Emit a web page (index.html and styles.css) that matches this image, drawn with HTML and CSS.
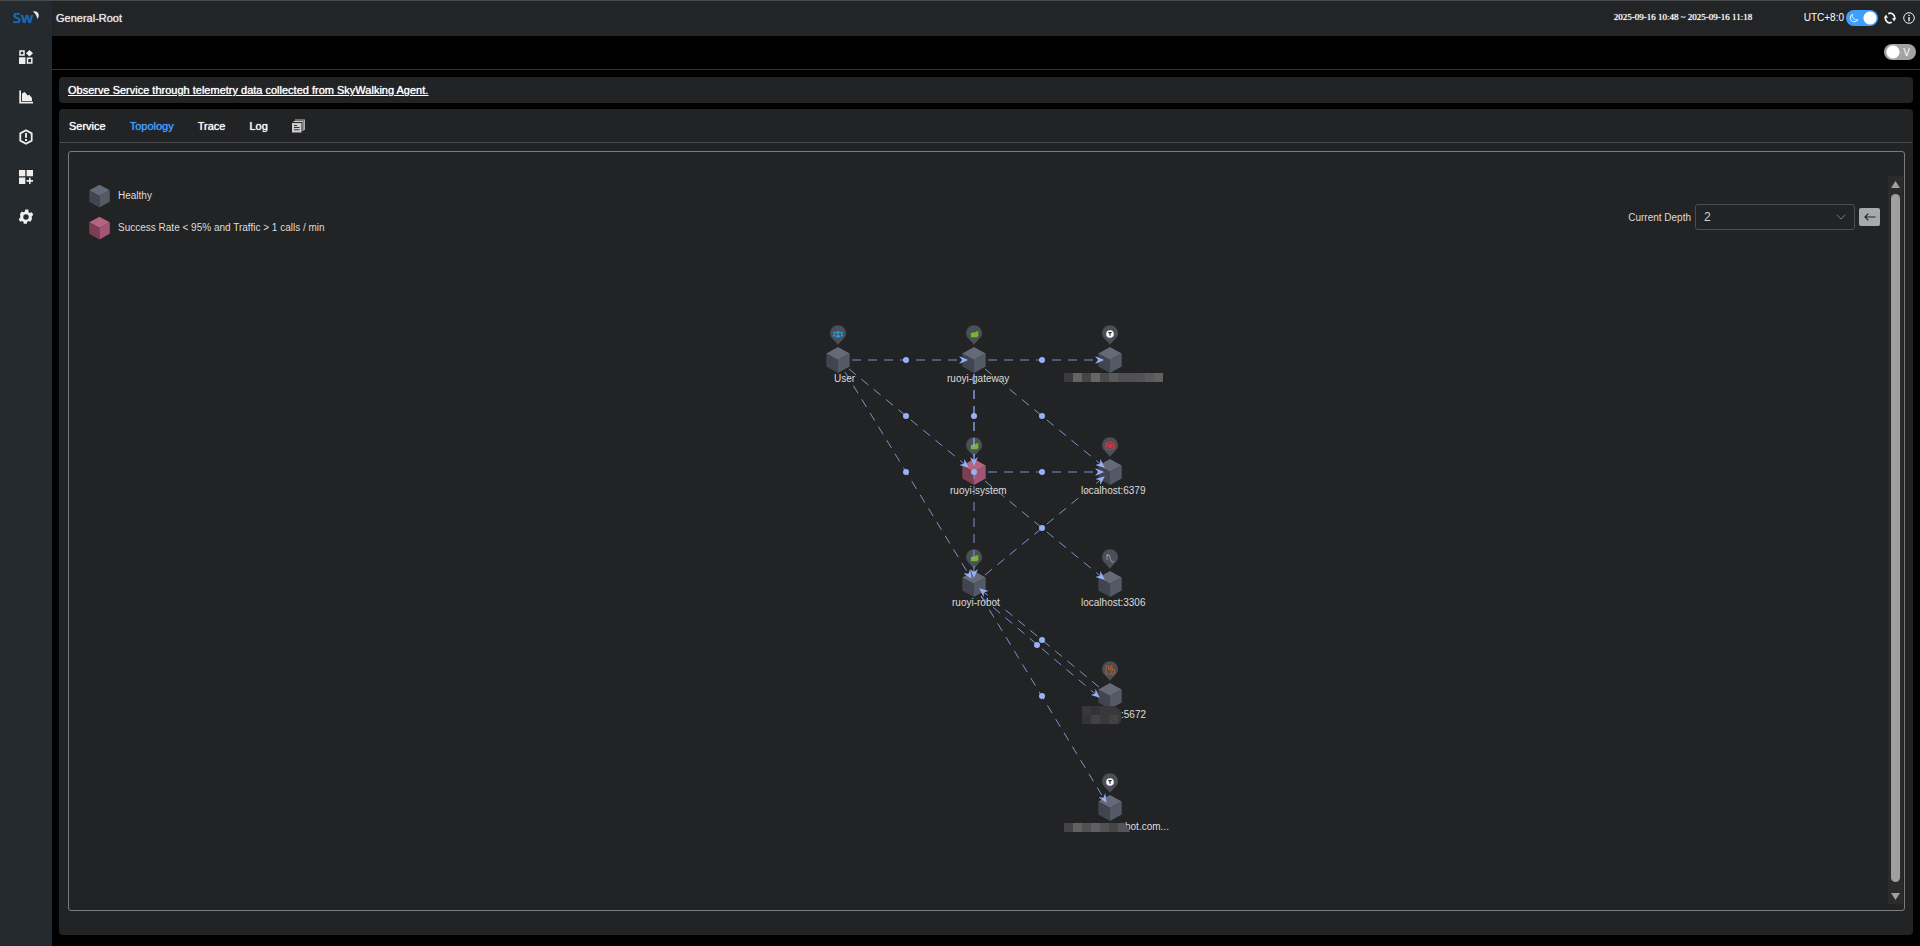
FILE: index.html
```html
<!DOCTYPE html>
<html lang="en">
<head>
<meta charset="utf-8">
<title>General-Root</title>
<link rel="stylesheet" href="styles.css">
</head>
<body>
<div class="app">
  <nav class="sidebar" aria-label="Main">
    <a class="logo" href="#" aria-label="SkyWalking">
      <span class="logo-text">Sw</span><svg class="logo-moon" viewBox="0 0 6 8"><path d="M0 .6C3.600-.6 8 2.400 4.400 8 4 5.200 2.600 3 0 .6z" fill="#e8eaec"/></svg>
    </a>
    <button class="nav-item" aria-label="Marketplace"><svg viewBox="0 0 14 14" fill="#eee"><path d="M0 7.3h6.4V14H0zM10.5 0 14 3.3 10.5 6.6 7 3.3z"/><path d="M1 1h4v4H1zM8.5 8.3h4.3V13H8.500z" fill="none" stroke="#eee" stroke-width="1.500"/></svg></button>
    <button class="nav-item" aria-label="Dashboards"><svg viewBox="0 0 14 14" fill="#eee"><path d="M.3.500h1.700v11.300H14v1.700H.3z"/><path d="M3 11V3.500L5.700 2l3 3.500 1.600-.8L13 8v3z"/></svg></button>
    <button class="nav-item" aria-label="Alerting"><svg class="tall" viewBox="0 0 14 16" fill="none" stroke="#eee"><path d="M7 1.200 12.700 4.400v7.200L7 14.800 1.300 11.600V4.400z" stroke-width="1.800" stroke-linejoin="round"/><path d="M7 4v4.800M7 10v2" stroke-width="1.900"/></svg></button>
    <button class="nav-item" aria-label="Add dashboard"><svg viewBox="0 0 14 14" fill="#eee"><path d="M0 0h6.300v6.300H0zM7.600 0H14v6.300H7.600zM0 7.600h6.300V14H0zM10 7.800h1.600v2.300H14v1.600h-2.400V14H10v-2.300H7.600v-1.600H10z"/></svg></button>
    <button class="nav-item" aria-label="Settings"><svg class="tall" viewBox="3 2 18 20" fill="#eee"><path d="M19.400 13a7.500 7.500 0 0 0 0-2l2.100-1.700-2-3.500-2.500 1a7.300 7.300 0 0 0-1.700-1L15 2.200h-4l-.4 2.600a7.300 7.300 0 0 0-1.700 1l-2.500-1-2 3.500L4.600 11a7.500 7.500 0 0 0 0 2l-2.100 1.700 2 3.500 2.500-1a7.300 7.300 0 0 0 1.700 1l.4 2.600h4l.4-2.600a7.300 7.300 0 0 0 1.700-1l2.500 1 2-3.500zM12 15.500a3.500 3.500 0 1 1 0-7 3.500 3.500 0 0 1 0 7z"/></svg></button>
  </nav>

  <div class="main">
    <header class="header">
      <h1 class="title">General-Root</h1>
      <time class="range">2025-09-16 10:48 ~ 2025-09-16 11:18</time>
      <span class="zone">UTC+8:0</span>
      <label class="switch switch-theme">
        <input type="checkbox" checked aria-label="Dark theme">
        <svg class="moon" viewBox="0 0 12 12" fill="none" stroke="#fff"><path d="M4.300 1.500A5 5 0 0 0 10.600 8 4.800 4.800 0 1 1 4.300 1.500z"/></svg>
      </label>
      <button class="icon-btn" aria-label="Refresh"><svg viewBox="0 0 12 12" fill="none" stroke="#f2f2f2" stroke-width="1.700"><path d="M4.200 1.700A4.500 4.500 0 0 1 10.300 7.400M7.800 10.300A4.500 4.500 0 0 1 1.700 4.600"/><path d="M12 6.300 10 9.600 8 6.300zM0 5.700 2 2.400 4 5.700z" fill="#f2f2f2" stroke="none"/></svg></button>
      <button class="icon-btn" aria-label="About"><svg viewBox="0 0 12 12" fill="none" stroke="#f2f2f2"><circle cx="6" cy="6" r="5.300"/><path d="M6 5v4.200M6 2.700v1.400" stroke-width="1.400"/></svg></button>
    </header>

    <div class="toolbar">
      <label class="switch switch-view"><input type="checkbox" aria-label="View mode"><span>V</span></label>
    </div>

    <section class="card note"><a href="#">Observe Service through telemetry data collected from SkyWalking Agent.</a></section>

    <section class="card board">
      <div class="tabs" role="tablist">
        <button class="tab" role="tab">Service</button>
        <button class="tab active" role="tab" aria-selected="true">Topology</button>
        <button class="tab" role="tab">Trace</button>
        <button class="tab" role="tab">Log</button>
        <button class="tab-copy" aria-label="Copy tabs"><svg viewBox="0 0 13 14"><path d="M3 1h9.300v10" fill="none" stroke="#bbb" stroke-width="1.200"/><path d="M1.500 2.500H11V12" fill="none" stroke="#ccc"/><path d="M0 4h9.500v9.500H0z" fill="#ccc"/><path d="M2 6.500h3M2 8.500h5.500M2 10.700h5.500" stroke="#333" stroke-width="1.100"/></svg></button>
      </div>
      <div class="frame">
        <div class="canvas">
          <div class="canvas-head">
            <ul class="legend">
              <li><svg viewBox="-12 -13 24 26"><use href="#cube"/></svg>Healthy</li>
              <li><svg viewBox="-12 -13 24 26"><use href="#cube-error"/></svg>Success Rate &lt; 95% and Traffic &gt; 1 calls / min</li>
            </ul>
            <div class="depth">
              <label for="depth">Current Depth</label>
              <span class="select-wrap">
                <select id="depth"><option>1</option><option selected>2</option><option>3</option></select>
                <svg viewBox="0 0 10 6" fill="none" stroke="#777a80"><path d="M.8.800 5 5 9.200.800"/></svg>
              </span>
              <button class="back" aria-label="Back"><svg viewBox="0 0 12 8" fill="none" stroke="#222" stroke-width="1.200"><path d="M11.500 4H1M4.300.700 1 4l3.300 3.300"/></svg></button>
            </div>
          </div>
          <svg class="graph" viewBox="778 300 401 560" role="img" aria-label="Service topology">
            <defs>
              <g id="cube"><path d="M0-13 11.700-6.500 0 0-11.700-6.500z" fill="#646a78"/><path d="M-11.700-6.500 0 0v13L-11.700 6.500z" fill="#42454f"/><path d="M0 0 11.700-6.500v13L0 13z" fill="#535a66"/></g>
              <g id="cube-error"><path d="M0-13 11.700-6.500 0 0-11.700-6.500z" fill="#b4647c"/><path d="M-11.700-6.500 0 0v13L-11.700 6.500z" fill="#7b3f52"/><path d="M0 0 11.700-6.500v13L0 13z" fill="#a35674"/></g>
              <path id="pin" d="M0-15C-3-20-8-22-8-26.800a8 8 0 0 1 16 0C8-22 3-20 0-15z" fill="#4b4f58"/>
              <path id="leaf" d="M-3.200 3.300V-.4Q-2.800-1.300-1.500-1.400L1.500-1.700 4.300-3.200V2Q3.500 3.300 2 3.300z" fill="#76b82a"/>
              <g id="http"><circle r="3.800" fill="#fff"/><path d="M-1.700-1.400h3.400M0-1.400V1.800" stroke="#333" stroke-width="1.200"/></g>
              <marker id="arrow" viewBox="0 0 9 8" refX="8" refY="4" markerWidth="9" markerHeight="8" markerUnits="userSpaceOnUse" orient="auto"><path d="M0 0 9 4 0 8 3 4z" fill="#97b0f8"/></marker>
            </defs>
            <g class="nodes">
              <use href="#cube" x="838" y="360"/><use href="#pin" x="838" y="360"/>
              <g transform="translate(838 334)" fill="#1b9be0"><circle cx="0" cy="-1.500" r="1.800"/><circle cx="-3.500" cy="-1.200" r="1.200"/><circle cx="3.500" cy="-1.200" r="1.200"/><path d="M-2.300 3.400V1.500Q0-.2 2.300 1.500V3.400zM-5 2.500V.6h2v1.900zM3 2.500V.6h2v1.900z"/></g>
              <use href="#cube" x="974" y="360"/><use href="#pin" x="974" y="360"/><use href="#leaf" x="974" y="334"/>
              <use href="#cube" x="1110" y="360"/><use href="#pin" x="1110" y="360"/><use href="#http" x="1110" y="334"/>
              <use href="#cube-error" x="974" y="472"/><use href="#pin" x="974" y="472"/><use href="#leaf" x="974" y="446"/>
              <use href="#cube" x="1110" y="472"/><use href="#pin" x="1110" y="472"/>
              <g transform="translate(1110 446)" fill="none" stroke="#dc3545"><path d="M0-4 4.300-2.500 0-1-4.300-2.500zM-4.300 0 0 1.500 4.300 0M-4.300 2.500 0 4 4.300 2.500M-4.300-2.500v5M4.300-2.500v5M-2-1.500 2 1M2-1.500-2 1"/></g>
              <use href="#cube" x="974" y="584"/><use href="#pin" x="974" y="584"/><use href="#leaf" x="974" y="558"/>
              <use href="#cube" x="1110" y="584"/><use href="#pin" x="1110" y="584"/>
              <path d="M1107 560v-5l2.500.5 1 4.500 1.500 2 2-.5M1106.500 555h2" fill="none" stroke="#a9abae" stroke-width=".8"/>
              <use href="#cube" x="1110" y="696"/><use href="#pin" x="1110" y="696"/>
              <path d="M1106 674v-8h2.500v3.500h2V666h1.500v3.500h2.500v4.500z M1111.500 673v-2h1.500" fill="none" stroke="#b85a22"/>
              <use href="#cube" x="1110" y="808"/><use href="#pin" x="1110" y="808"/><use href="#http" x="1110" y="782"/>
            </g>
            <g class="labels">
              <text x="834" y="382">User</text>
              <text x="947" y="382">ruoyi-gateway</text>
              <text x="950" y="494">ruoyi-system</text>
              <text x="1081" y="494">localhost:6379</text>
              <text x="952" y="606">ruoyi-robot</text>
              <text x="1081" y="606">localhost:3306</text>
              <text x="1121" y="718">:5672</text>
              <text x="1125" y="830">bot.com...</text>
            </g>
            <g class="masks">
              <path fill="#3b3b3d" d="M1064 373h9v9h-9z"/><path fill="#636364" d="M1073 373h9v9h-9z"/><path fill="#454546" d="M1082 373h9v9h-9z"/><path fill="#666667" d="M1091 373h9v9h-9z"/><path fill="#4a4a4c" d="M1100 373h9v9h-9z"/><path fill="#59595b" d="M1109 373h9v9h-9z"/><path fill="#505052" d="M1118 373h18v9h-18z"/><path fill="#525254" d="M1136 373h9v9h-9z"/><path fill="#59595a" d="M1145 373h9v9h-9z"/><path fill="#606061" d="M1154 373h9v9h-9z"/>
              <path fill="#39393b" d="M1082 706h32q5 2 7 6v9q-1 3-4 3h-35z"/><path fill="#424244" d="M1091 715h9v9h-9zM1109 715h9v9h-9z"/><path fill="#343437" d="M1091 706h9v9h-9zM1082 715h9v9h-9z"/>
              <path fill="#444446" d="M1064 823h9v9h-9z"/><path fill="#616162" d="M1073 823h9v9h-9z"/><path fill="#515153" d="M1082 823h9v9h-9z"/><path fill="#606062" d="M1091 823h9v9h-9z"/><path fill="#525254" d="M1100 823h9v9h-9z"/><path fill="#464648" d="M1109 823h9v9h-9z"/><path fill="#555557" d="M1118 823h6q4 3 6 9h-12z"/>
            </g>
            <g class="edges">
              <path d="M852 360H967"/><path d="M988 360H1103"/>
              <path d="M849 369 968 467"/><path d="M845 372 971 578"/>
              <path d="M974 374V465"/><path d="M974 374V577"/>
              <path d="M985 369 1104 467"/><path d="M988 472H1103"/>
              <path d="M985 481 1104 579"/><path d="M985 575 1104 477"/>
              <path d="M981 597 1099 697"/><path d="M1099 687 980 589"/>
              <path d="M981 596 1106 802"/>
            </g>
            <g class="dots">
              <circle cx="906" cy="360" r="3"/><circle cx="1042" cy="360" r="3"/>
              <circle cx="906" cy="416" r="3"/><circle cx="974" cy="416" r="3"/><circle cx="1042" cy="416" r="3"/>
              <circle cx="906" cy="472" r="3"/><circle cx="974" cy="472" r="3"/><circle cx="1042" cy="472" r="3"/>
              <circle cx="1042" cy="528" r="3"/><circle cx="1042" cy="640" r="3"/><circle cx="1037" cy="645" r="3"/><circle cx="1042" cy="696" r="3"/>
            </g>
          </svg>
        </div>
        <div class="scrollbar" aria-hidden="true">
          <svg viewBox="0 0 9 7"><path d="M4.500 0 9 7H0z" fill="#9f9f9f"/></svg>
          <div class="thumb"></div>
          <svg viewBox="0 0 9 7"><path d="M4.500 7 9 0H0z" fill="#9f9f9f"/></svg>
        </div>
      </div>
    </section>
  </div>
</div>
</body>
</html>
```
FILE: styles.css
```css
* { box-sizing: border-box; }
body {
  margin: 0;
  background: #000;
  color: #e5e5e5;
  font-family: "Liberation Sans", Arial, sans-serif;
  font-size: 10px;
}
button { border: 0; padding: 0; background: none; font-family: inherit; cursor: pointer; }
svg { display: block; }

.app { display: flex; min-height: 100vh; border-top: 1px solid #48494b; }

.sidebar {
  display: flex;
  flex-direction: column;
  align-items: center;
  flex: none;
  width: 52px;
  background: #252a2f;
}
.logo { display: flex; height: 36px; padding: 7px 0 0; color: #1a6cb8; text-decoration: none; }
.logo-text { font: 500 15px/18px "Noto Sans", "Open Sans", sans-serif; text-shadow: 0 0 1px #1a6cb8; }
.logo-moon { width: 6px; height: 8px; margin-top: 3px; }
.nav-item { display: grid; place-items: center; width: 52px; height: 40px; }
.nav-item svg { width: 14px; height: 14px; }
.nav-item .tall { width: 14px; height: 16px; }

.main { display: flex; flex-direction: column; flex: 1; min-width: 0; }

.header {
  display: flex;
  align-items: center;
  height: 35px;
  padding: 0 5px 1px 4px;
  background: #222426;
}
.title { flex: 1; margin: 0; font-size: 11px; font-weight: 400; text-shadow: 0 0 1px #e5e5e5; }
.range { width: 190px; color: #fff; font: 9px/12px "Liberation Serif", "Times New Roman", serif; padding-bottom: 2px; text-shadow: 0 0 1px #fff; }
.zone { margin-right: 2px; color: #fff; padding-bottom: 2px; }

.switch { display: block; position: relative; width: 32px; height: 16px; }
.switch input {
  appearance: none;
  display: block;
  width: 32px;
  height: 16px;
  margin: 0;
  border-radius: 8px;
  background: #a3a3a3 radial-gradient(circle at 9px 8px, #fff 6px, transparent 7px);
}
.switch input:checked { background: #409eff radial-gradient(circle at 24px 8px, #fff 6px, transparent 7px); }
.switch span { position: absolute; right: 6px; top: 2px; color: #fff; font-size: 10px; line-height: 13px; }
.moon { position: absolute; left: 3px; top: 3px; width: 10px; height: 10px; }
.icon-btn { margin-left: 6px; }
.icon-btn + .icon-btn { margin-left: 7px; }
.icon-btn svg { width: 12px; height: 12px; }

.toolbar {
  display: flex;
  align-items: center;
  justify-content: flex-end;
  height: 34px;
  padding: 0 4px 1px 0;
  border-bottom: 1px solid #333436;
}

.card { margin: 0 7px; border-radius: 4px; background: #222325; }
.note { margin-top: 7px; padding: 6px 9px; font-size: 11px; line-height: 14px; text-shadow: 0 0 1px #fff; }
.note a { color: #fff; }

.board { display: flex; flex-direction: column; flex: 1; margin-top: 6px; margin-bottom: 11px; }
.tabs { display: flex; align-items: center; gap: 24px; height: 34px; margin: 0 1px; padding: 0 9px; border-bottom: 1px solid #4b4c4f; }
.tab { color: #fff; font-size: 11px; text-shadow: 0 0 1px #fff; }
.tab.active { color: #409eff; text-shadow: 0 0 1px #409eff; }
.tab-copy svg { width: 13px; height: 14px; }

.frame {
  display: flex;
  flex: 1;
  margin: 8px 8px 24px 9px;
  padding: 24px 1px 6px 0;
  border: 1px solid #7a7b7e;
  border-radius: 3px;
}
.canvas { flex: 1; min-width: 0; }
.canvas-head { display: flex; justify-content: space-between; height: 124px; padding: 8px 8px 0 20px; }
.legend { display: grid; gap: 9px; align-content: start; margin: 0; padding: 0; list-style: none; }
.legend li { display: flex; align-items: center; gap: 8px; height: 23px; color: #ddd; }
.legend svg { width: 21px; height: 24px; }
.depth { display: flex; align-items: center; align-self: flex-start; margin-top: 20px; gap: 4px; color: #ddd; }
.select-wrap { position: relative; }
.select-wrap select {
  appearance: none;
  display: block;
  width: 160px;
  height: 26px;
  padding: 0 8px;
  border: 1px solid #4c4d4f;
  border-radius: 3px;
  background: #222325;
  color: #cfd3dc;
  font: 12px "Liberation Sans", Arial, sans-serif;
}
.select-wrap svg { position: absolute; right: 9px; top: 10px; width: 10px; height: 6px; pointer-events: none; }
.back { display: grid; place-items: center; width: 21px; height: 18px; border-radius: 2px; background: #a8a9ab; }
.back svg { width: 12px; height: 8px; }

.graph { width: 401px; height: 560px; margin: 0 auto; }
.labels { fill: #ddd; font-size: 10px; }
.edges { fill: none; stroke: #8fa5e8; stroke-opacity: .85; stroke-dasharray: 9 7; }
.edges path { marker-end: url(#arrow); }
.dots { fill: #97b0f8; }

.scrollbar { display: flex; flex-direction: column; align-items: center; justify-content: space-between; width: 15px; padding: 5px 0 4px; background: #2b2b2b; }
.scrollbar svg { width: 9px; height: 7px; }
.thumb { flex: 1; width: 9px; margin: 6px 0 11px; border-radius: 5px; background: #9f9f9f; }
```
